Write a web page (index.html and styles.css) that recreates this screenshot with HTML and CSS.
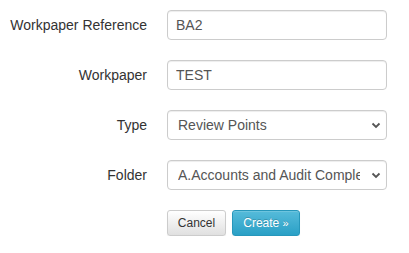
FILE: index.html
```html
<!DOCTYPE html>
<html lang="en">
<head>
  <meta charset="UTF-8" />
  <meta name="viewport" content="width=device-width, initial-scale=1.0" />
  <title>New Workpaper</title>
  <link rel="stylesheet" href="styles.css">
</head>
<body>
  <form class="form-horizontal">
    <div class="form-group">
      <label class="control-label" for="wpRef">Workpaper Reference</label>
      <div class="field">
        <input id="wpRef" class="form-control" type="text" value="BA2">
      </div>
    </div>
    <div class="form-group">
      <label class="control-label" for="wpName">Workpaper</label>
      <div class="field">
        <input id="wpName" class="form-control" type="text" value="TEST">
      </div>
    </div>
    <div class="form-group">
      <label class="control-label" for="wpType">Type</label>
      <div class="field select-wrap">
        <select id="wpType" class="form-control">
          <option>Review Points</option>
        </select>
        <svg class="chevron" width="10" height="7" viewBox="0 0 10 7"><path d="M1.5 1.5 L5 5 L8.5 1.5" fill="none" stroke="#555" stroke-width="1.8"/></svg>
      </div>
    </div>
    <div class="form-group">
      <label class="control-label" for="wpFolder">Folder</label>
      <div class="field select-wrap">
        <select id="wpFolder" class="form-control">
          <option>A.Accounts and Audit Completion</option>
        </select>
        <svg class="chevron" width="10" height="7" viewBox="0 0 10 7"><path d="M1.5 1.5 L5 5 L8.5 1.5" fill="none" stroke="#555" stroke-width="1.8"/></svg>
      </div>
    </div>
    <div class="form-actions">
      <button type="button" class="btn btn-default">Cancel</button>
      <button type="submit" class="btn btn-info">Create <span class="raquo">&raquo;</span></button>
    </div>
  </form>
</body>
</html>
```

FILE: styles.css
```css
html, body {
  margin: 0;
  background: #fff;
}
body {
  font-family: "Liberation Sans", Arial, sans-serif;
  font-size: 14px;
  color: #333;
  padding: 10px 0 0 0;
}
.form-horizontal {
  display: flex;
  flex-direction: column;
  gap: 20px;
}
.form-group {
  display: flex;
  align-items: center;
  gap: 20px;
  height: 30px;
}
.control-label {
  width: 147px;
  text-align: right;
  color: #333;
}
.field {
  width: 220px;
}
.select-wrap {
  position: relative;
}
.form-control {
  box-sizing: border-box;
  display: block;
  width: 220px;
  height: 30px;
  margin: 0;
  padding: 4px 8px;
  font-family: inherit;
  font-size: 14px;
  color: #555;
  background: #fff;
  border: 1px solid #ccc;
  border-radius: 4px;
  box-shadow: inset 0 1px 1px rgba(0, 0, 0, 0.075);
  outline: none;
}
select.form-control {
  appearance: none;
  -webkit-appearance: none;
  padding: 4px 26px 4px 10px;
  white-space: nowrap;
  overflow: hidden;
}
.chevron {
  position: absolute;
  right: 6px;
  top: 12px;
  pointer-events: none;
}
.form-actions {
  display: flex;
  gap: 6px;
  padding-left: 167px;
}
.btn {
  box-sizing: border-box;
  height: 26px;
  padding: 0;
  font-family: inherit;
  font-size: 12px;
  white-space: nowrap;
  text-align: center;
  border-radius: 3px;
  cursor: pointer;
}
.btn-default {
  width: 59px;
  color: #333;
  background: linear-gradient(to bottom, #fff 0, #e0e0e0 100%);
  border: 1px solid #ccc;
  box-shadow: inset 0 1px 0 rgba(255, 255, 255, 0.15), 0 1px 1px rgba(0, 0, 0, 0.075);
}
.btn-info {
  width: 68px;
  color: #fff;
  background: linear-gradient(to bottom, #56bbda 0, #2aa0c6 100%);
  border: 1px solid #2797bb;
  text-shadow: 0 -1px 0 rgba(0, 0, 0, 0.2);
  box-shadow: inset 0 1px 0 rgba(255, 255, 255, 0.15), 0 1px 1px rgba(0, 0, 0, 0.075);
}
.raquo {
  font-size: 11px;
}
```
